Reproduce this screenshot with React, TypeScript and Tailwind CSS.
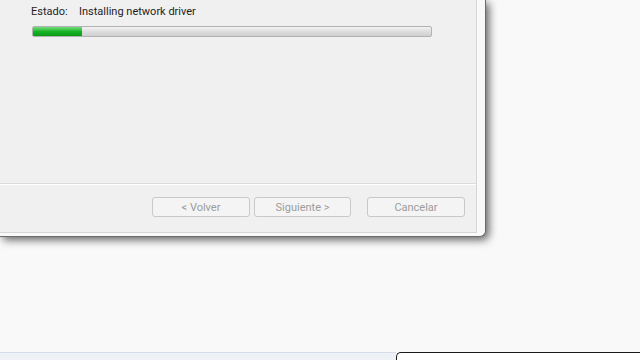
import React from "react";

function Btn({ label, w }: { label: string; w: string }) {
  return (
    <div
      className={`${w} h-[20px] flex items-center justify-center rounded-[3px] border border-[#c9c9c9] bg-[#f4f4f4] text-[11px] text-[#9c9c9c] leading-none`}
    >
      {label}
    </div>
  );
}

export default function App() {
  return (
    <div
      className="w-[640px] h-[360px] bg-[#f9f9f9] flex flex-col overflow-hidden"
      style={{ fontFamily: 'Roboto, "Noto Sans", sans-serif' }}
    >
      {/* window */}
      <div className="w-[486px] h-[237px] shrink-0 bg-[#f9f9f9] rounded-br-[6px] shadow-[3px_3px_9px_rgba(0,0,0,0.6)] border-r border-b border-[#6b6b6b] pr-[8px] pb-[3px]">
        <div className="h-full border-r border-b border-[#d6d6d6] bg-[#f0f0f0] flex flex-col">
          <div className="h-[183px] shrink-0 pl-[31px] pt-[4px]">
            <div className="flex text-[11px] leading-[15px] text-[#1e1e1e]">
              <span className="w-[48px]">Estado:</span>
              <span>Installing network driver</span>
            </div>
            <div className="mt-[7px] ml-[1px] w-[400px] h-[11px] rounded-[2px] border border-[#b2b2b2] bg-gradient-to-b from-[#f2f2f2] via-[#dedede] to-[#cfcfcf] overflow-hidden">
              <div className="w-[49px] h-full bg-gradient-to-b from-[#6fdc78] via-[#17b526] to-[#0b9a18]" />
            </div>
          </div>
          <div className="h-[1px] bg-[#dcdcdc]" />
          <div className="h-[1px] bg-[#ffffff]" />
          <div className="flex-1 flex justify-end pr-[11px] pt-[12px]">
            <div className="flex">
              <Btn label="< Volver" w="w-[98px]" />
              <div className="w-[4px]" />
              <Btn label="Siguiente >" w="w-[97px]" />
              <div className="w-[16px]" />
              <Btn label="Cancelar" w="w-[98px]" />
            </div>
          </div>
        </div>
      </div>
      <div className="flex-1" />
      {/* bottom strip */}
      <div className="h-[8px] shrink-0 flex">
        <div className="w-[396px] bg-[#eef1f6] border-t border-[#d6deeb]" />
        <div className="flex-1 bg-white border-t border-l border-[#1a1a1a] rounded-tl-[5px]" />
      </div>
    </div>
  );
}
